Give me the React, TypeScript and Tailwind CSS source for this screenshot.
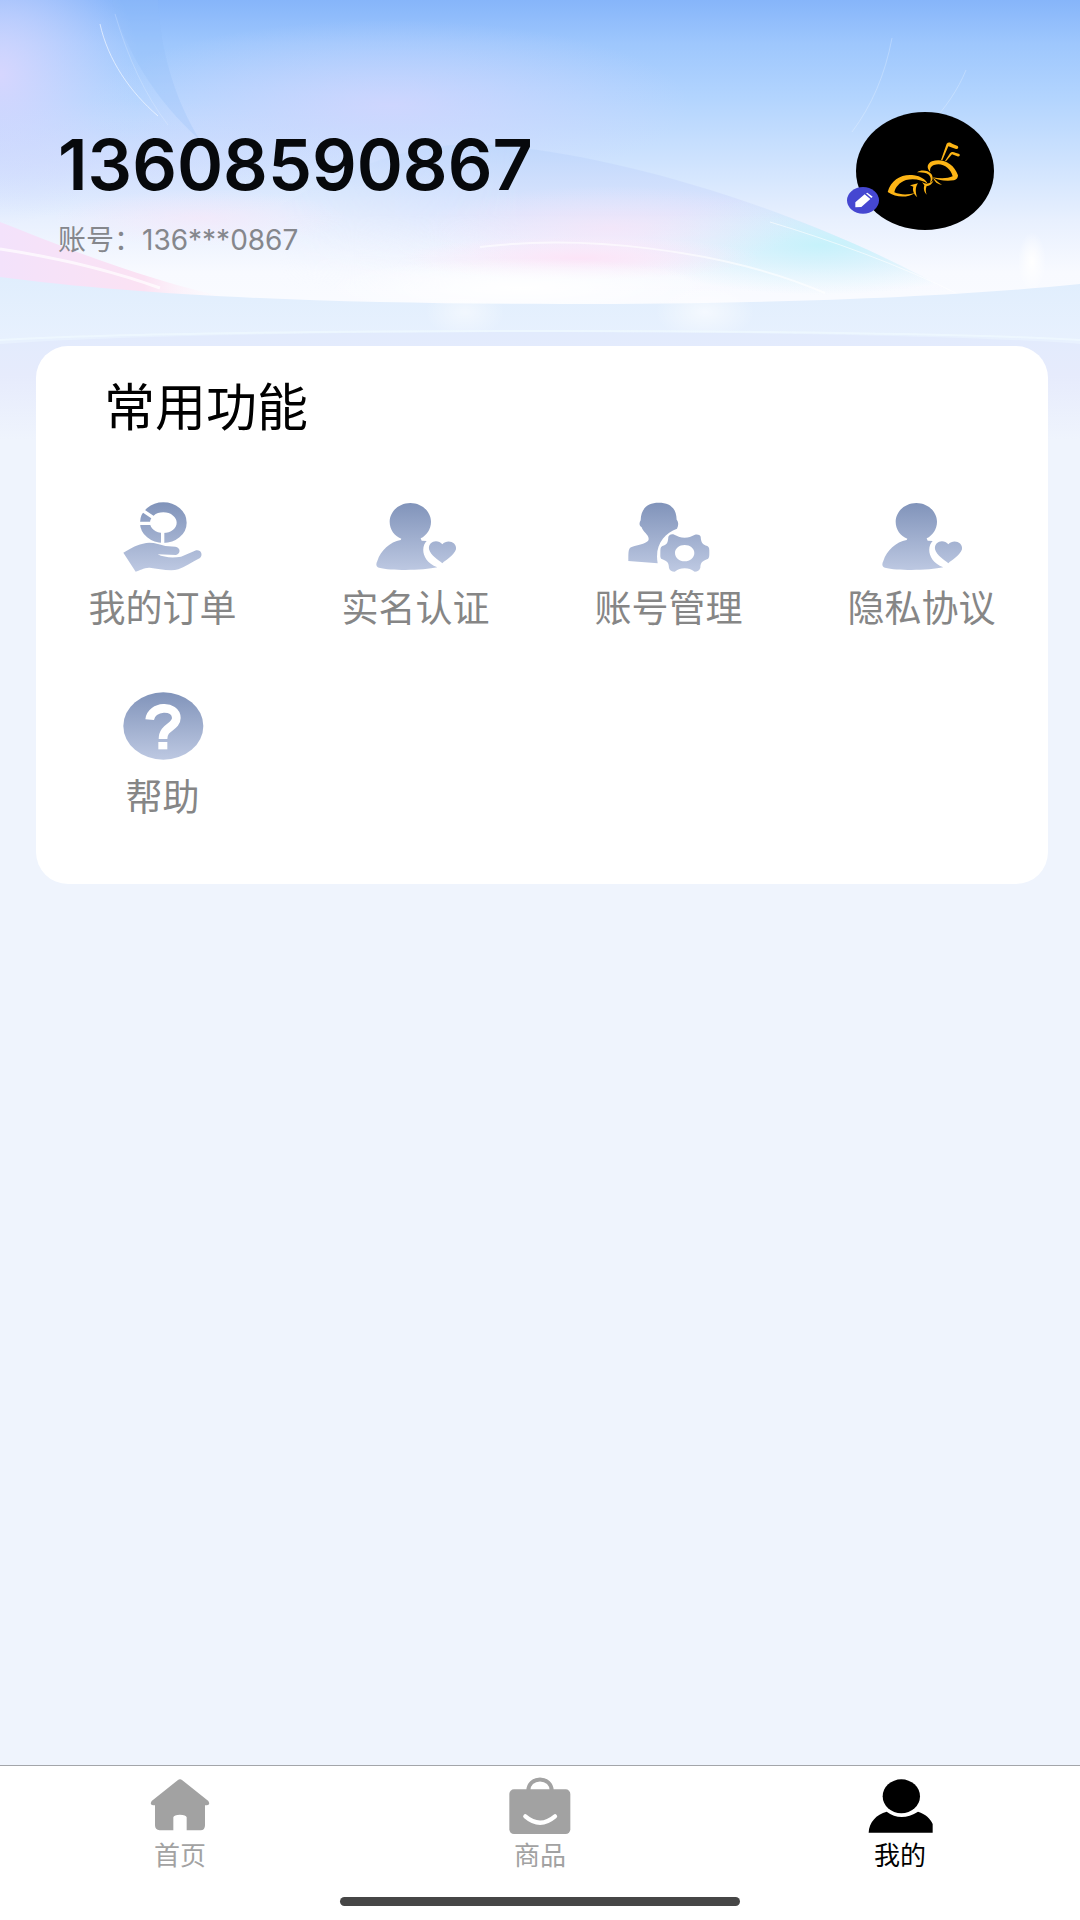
import React, { ReactElement } from 'react';

interface FeatureProps {
  label: string;
  children: ReactElement;
}

interface TabProps {
  label: string;
  icon: ReactElement;
  active?: boolean;
}

const HeaderArt = () => (
  <svg
    className="absolute inset-x-0 top-0 h-[440px] w-full"
    viewBox="0 0 1080 440"
    preserveAspectRatio="none"
    aria-hidden="true"
  >
    <defs>
      <linearGradient id="sky" x1="0" y1="0" x2="0" y2="1">
        <stop offset="0" stopColor="#86b5fa" />
        <stop offset="0.1" stopColor="#9ec7fd" />
        <stop offset="0.22" stopColor="#b2d4fe" />
        <stop offset="0.36" stopColor="#cde2fe" />
        <stop offset="0.5" stopColor="#e8f0fe" />
        <stop offset="0.62" stopColor="#f8faff" />
        <stop offset="1" stopColor="#ffffff" />
      </linearGradient>
      <radialGradient id="violet">
        <stop offset="0" stopColor="#d6d6fe" />
        <stop offset="1" stopColor="#d0d8ff" stopOpacity="0" />
      </radialGradient>
      <radialGradient id="pink">
        <stop offset="0" stopColor="#fce4f7" />
        <stop offset="1" stopColor="#fde8fa" stopOpacity="0" />
      </radialGradient>
      <radialGradient id="white">
        <stop offset="0" stopColor="#ffffff" />
        <stop offset="1" stopColor="#ffffff" stopOpacity="0" />
      </radialGradient>
      <radialGradient id="cyan">
        <stop offset="0" stopColor="#c6f2fb" />
        <stop offset="1" stopColor="#cdf0fc" stopOpacity="0" />
      </radialGradient>
      <linearGradient id="hill" x1="0" y1="0" x2="0" y2="1">
        <stop offset="0" stopColor="#bfd7fc" />
        <stop offset="0.45" stopColor="#dce5fd" />
        <stop offset="1" stopColor="#ffffff" stopOpacity="0" />
      </linearGradient>
      <linearGradient id="fadeIn" gradientUnits="userSpaceOnUse" x1="270" y1="0" x2="520" y2="0">
        <stop offset="0" stopColor="#000000" />
        <stop offset="1" stopColor="#ffffff" />
      </linearGradient>
      <linearGradient id="ribbon" x1="0" y1="0" x2="1" y2="0">
        <stop offset="0" stopColor="#f3e2fb" />
        <stop offset="0.6" stopColor="#fbe2f3" />
        <stop offset="1" stopColor="#ffffff" stopOpacity="0" />
      </linearGradient>
      <linearGradient id="water" x1="0" y1="0" x2="0" y2="1">
        <stop offset="0" stopColor="#e0eefd" />
        <stop offset="0.4" stopColor="#e8f1fe" />
        <stop offset="1" stopColor="#eff4fd" />
      </linearGradient>
      <linearGradient id="shore" x1="0" y1="0" x2="0" y2="1">
        <stop offset="0" stopColor="#e2ebfd" />
        <stop offset="0.4" stopColor="#e6ebfc" />
        <stop offset="1" stopColor="#eff4fd" />
      </linearGradient>
      <mask id="hillMask">
        <rect width="1080" height="440" fill="url(#fadeIn)" />
      </mask>
      <clipPath id="hillClip">
        <path d="M280 205 C360 160 430 140 490 145 C620 153 820 215 965 300 L280 300 Z" />
      </clipPath>
    </defs>
    <rect width="1080" height="440" fill="url(#sky)" />
    <ellipse cx="0" cy="75" rx="140" ry="150" fill="url(#violet)" />
    <ellipse cx="390" cy="105" rx="300" ry="85" fill="url(#violet)" opacity="0.75" />
    <ellipse cx="130" cy="160" rx="230" ry="60" fill="url(#violet)" opacity="0.4" />
    <path d="M112 0 C125 50 155 100 200 140 C175 100 160 50 158 0 Z" fill="#8fbaf9" opacity="0.25" />
    <g mask="url(#hillMask)">
      <path d="M280 205 C360 160 430 140 490 145 C620 153 820 215 965 300 L280 300 Z" fill="url(#hill)" />
    </g>
    <g clipPath="url(#hillClip)">
      <ellipse cx="820" cy="245" rx="190" ry="50" fill="url(#cyan)" />
      <ellipse cx="610" cy="228" rx="190" ry="42" fill="url(#pink)" opacity="0.6" />
    </g>
    <ellipse cx="200" cy="218" rx="150" ry="28" fill="url(#pink)" opacity="0.5" />
    <ellipse cx="580" cy="258" rx="180" ry="22" fill="url(#pink)" />
    <ellipse cx="520" cy="288" rx="200" ry="30" fill="url(#white)" />
    <path d="M480 247 C580 235 720 248 825 293" fill="none" stroke="#ffffff" strokeWidth="2" opacity="0.6" />
    <path d="M770 222 C830 240 900 265 960 295" fill="none" stroke="#ffffff" strokeWidth="1" opacity="0.6" />
    <path d="M0 222 C60 245 140 280 240 300 C150 300 70 290 0 279 Z" fill="url(#ribbon)" />
    <path d="M0 249 C60 258 110 270 160 288" fill="none" stroke="#ffffff" strokeWidth="3" opacity="0.7" />
    <path d="M100 24 C108 60 130 92 158 116" fill="none" stroke="#ffffff" strokeWidth="1" opacity="0.6" />
    <path d="M115 14 C128 58 145 95 168 125" fill="none" stroke="#ffffff" strokeWidth="1" opacity="0.2" />
    <path d="M892 38 C885 75 872 105 852 132 M966 70 C958 90 945 108 930 125" fill="none" stroke="#ffffff" strokeWidth="1" opacity="0.25" />
    <ellipse cx="1032" cy="262" rx="14" ry="30" fill="url(#white)" />
    <path d="M0 277 C150 297 350 304 560 304 C780 304 950 297 1080 284 V440 H0 Z" fill="url(#water)" />
    <ellipse cx="465" cy="312" rx="40" ry="26" fill="url(#white)" opacity="0.5" />
    <ellipse cx="705" cy="312" rx="50" ry="28" fill="url(#white)" opacity="0.6" />
    <path d="M0 344 C200 328 880 328 1080 344 V440 H0 Z" fill="url(#shore)" />
    <path d="M0 340 C200 328 880 328 1080 340" fill="none" stroke="#f2fbff" strokeWidth="2" opacity="0.6" />
  </svg>
);

const AntLogo = () => (
  <svg className="h-[118px] w-[138px]" viewBox="78 36 414 354" aria-hidden="true">
    <ellipse cx="285" cy="213" rx="207" ry="177" fill="#000000" />
    <g fill="#fdb515">
      <path d="M173 276 C184 238 216 221 252 226 C272 229 286 238 293 251 C276 239 250 234 228 240 C208 247 196 262 193 277 C212 285 236 285 256 278 C232 294 200 294 173 276 Z" />
      <path d="M261 217 C272 209 294 210 304 222 C311 233 308 244 299 250 C306 236 301 225 289 220 C280 217 271 217 261 217 Z" />
      <path d="M301 216 C288 204 292 190 306 184 C336 173 372 190 384 226 C384 234 380 239 372 241 C346 245 322 240 307 232 C330 236 354 236 368 229 C362 203 336 186 312 195 C302 199 299 207 301 216 Z" />
      <path d="M240 256 L264 250 C255 261 256 280 262 292 C250 281 247 270 250 260 Z" />
      <path d="M276 246 C288 255 302 251 311 241 C306 254 298 259 290 258 C286 267 287 276 290 284 C280 274 281 263 283 256 Z" />
      <path d="M309 233 C318 240 326 248 336 254 C324 253 315 247 309 233 Z" />
      <path d="M333 180 L350 131 C355 125 363 128 368 132 L383 138 C388 144 382 149 376 146 L355 139 L337 181 Z" />
      <path d="M345 183 L360 160 C364 155 370 155 376 158 L388 162 C392 167 387 171 382 169 L366 163 L348 184 Z" />
    </g>
  </svg>
);

const PencilBadge = () => (
  <svg className="h-[27px] w-8" viewBox="0 0 96 81" aria-hidden="true">
    <ellipse cx="48" cy="40" rx="48" ry="40" fill="#4547d1" />
    <path d="M25 46 L53 22 L70 36 L43 60 L25 61 Z M57 19 L61 17 L77 29 L73 33 Z" fill="#ffffff" />
  </svg>
);

const OrderIcon = () => (
  <svg className="h-[72px] w-[84px]" viewBox="0 0 252 216" aria-hidden="true">
    <ellipse cx="127" cy="65" rx="55" ry="46" fill="none" stroke="url(#steel)" strokeWidth="30" />
    <path d="M127 70 L60 25 M127 67 H48 M125 66 V128" stroke="#ffffff" strokeWidth="10" />
    <path
      d="M7 155 C25 145 40 134 66 128 C90 121 115 130 133 135 L163 137 C179 139 180 158 165 162 L110 160 C128 170 158 171 180 167 L222 149 C238 143 248 160 237 171 C212 184 190 198 172 205 C148 212 112 203 86 200 C70 199 55 209 44 212 Z"
      fill="url(#steel)"
    />
  </svg>
);

const PersonHeartIcon = () => (
  <svg className="h-[72px] w-[84px]" viewBox="0 0 252 216" aria-hidden="true">
    <path
      d="M109 6 C143 6 171 32 171 62 C171 84 158 103 140 112 L143 119 L158 120 C141 135 141 181 190 199 C150 208 55 210 15 200 C6 197 5 190 10 180 C20 148 48 123 80 117 L82 113 C61 105 47 85 47 62 C47 32 75 6 109 6 Z"
      fill="url(#steel)"
    />
    <path
      d="M205 187 C195 178 170 164 165 145 C162 120 192 114 205 130 C218 114 249 121 246 145 C240 164 216 176 205 187 Z"
      fill="url(#steel)"
    />
  </svg>
);

const PersonGearIcon = () => (
  <svg className="h-[72px] w-[84px]" viewBox="0 0 252 216" aria-hidden="true">
    <path
      d="M95 5 C130 5 148 22 149 56 C155 64 155 72 150 83 C112 97 82 132 92 187 L4 180 C4 152 4 141 14 138 C38 131 64 127 65 115 C66 101 47 93 44 79 C36 73 36 66 41 58 C42 22 62 5 95 5 Z"
      fill="url(#steel)"
    />
    <path
      fillRule="evenodd"
      d="M128 102 C132 99 138 99 142 101 C155 107 160 110 173 110 C186 110 191 107 204 101 C211 99 219 101 221 107 C222 124 226 130 241 135 C247 138 247 144 247 155 C247 166 247 172 240 175 C225 181 221 185 220 200 C218 208 211 212 203 212 C191 205 186 202 173 202 C160 202 155 205 143 212 C135 212 127 208 126 201 C125 185 121 181 106 175 C99 172 100 166 100 155 C100 144 100 138 106 135 C121 130 123 124 124 107 Z M173 132 C157 132 144 142 144 156 C144 170 157 181 173 181 C189 181 202 170 202 156 C202 142 189 132 173 132 Z"
      fill="url(#steel)"
    />
  </svg>
);

const HelpIcon = () => (
  <svg className="h-[72px] w-[84px]" viewBox="0 0 252 216" aria-hidden="true">
    <ellipse cx="127" cy="108" rx="120" ry="101" fill="url(#steel)" />
    <path
      d="M86 89 C90 46 166 43 166 84 C166 112 126 109 126 147"
      fill="none"
      stroke="#ffffff"
      strokeWidth="26"
    />
    <path d="M112 156 H139 V178 H112 Z" fill="#ffffff" />
  </svg>
);

const HomeIcon = () => (
  <svg className="h-[60px] w-[66px]" viewBox="0 0 198 180">
    <path
      d="M92 19 Q99 13 106 19 L184 81 Q191 92 180 94 H174 V154 Q174 169 161 169 H119 V130 Q117 122 99 122 Q81 122 79 130 V169 H38 Q24 167 24 154 V94 H18 Q7 92 14 81 Z"
      fill="currentColor"
    />
  </svg>
);

const BagIcon = () => (
  <svg className="h-[60px] w-[66px]" viewBox="0 0 198 180">
    <path d="M64 54 C60 4 138 4 134 54" fill="none" stroke="currentColor" strokeWidth="12" />
    <rect x="7" y="46" width="183" height="134" rx="14" fill="currentColor" />
    <path d="M55 127 Q99 165 144 127" fill="none" stroke="#ffffff" strokeWidth="13" strokeLinecap="round" />
  </svg>
);

const MineIcon = () => (
  <svg className="h-[60px] w-[66px]" viewBox="0 0 198 180">
    <ellipse cx="103" cy="67" rx="56" ry="51" fill="currentColor" />
    <path d="M59 113 Q102 145 153 113 C176 120 190 134 197 150 V176 H5 C6 145 28 121 59 113 Z" fill="currentColor" />
  </svg>
);

const Feature = ({ label, children }: FeatureProps) => (
  <button type="button" className="flex flex-col items-center gap-3.5">
    {children}
    <span className="text-[37px] leading-[44px] text-[#868686]">{label}</span>
  </button>
);

const Tab = ({ label, icon, active }: TabProps) => (
  <a
    href="#"
    aria-current={active ? 'page' : undefined}
    className={
      active
        ? 'flex flex-col items-center gap-1.5 text-black'
        : 'flex flex-col items-center gap-1.5 text-[#a2a2a2]'
    }
  >
    {icon}
    <span className="text-[26px] leading-8">{label}</span>
  </a>
);

export default function App() {
  return (
    <div className="relative isolate flex min-h-screen flex-col bg-[#eff4fd] font-['Inter','Noto_Sans_CJK_SC',sans-serif]">
      <svg className="absolute h-0 w-0" aria-hidden="true">
        <defs>
          <linearGradient id="steel" gradientUnits="userSpaceOnUse" x1="0" y1="0" x2="0" y2="216">
            <stop offset="0" stopColor="#7f92b9" />
            <stop offset="1" stopColor="#bfcae3" />
          </linearGradient>
        </defs>
      </svg>
      <div className="absolute inset-x-0 top-0 -z-10">
        <HeaderArt />
      </div>

      <header className="flex items-start justify-between pt-28 pr-[86px] pl-[58px]">
        <div className="pt-3">
          <h1 className="text-[70px] leading-[82px] font-semibold text-[#07090c]">13608590867</h1>
          <p className="mt-4 text-[28px] leading-9 text-[#85878c]">账号：136***0867</p>
        </div>
        <button type="button" aria-label="编辑头像" className="relative">
          <AntLogo />
          <span className="absolute bottom-4 -left-[9px]">
            <PencilBadge />
          </span>
        </button>
      </header>

      <main className="flex-1">
        <section className="mt-[88px] mr-8 ml-9 rounded-[32px] bg-white pt-[30px] pb-16">
          <h2 className="pl-[68px] text-[51px] leading-[64px] text-black">常用功能</h2>
          <div className="mt-[61px] grid grid-cols-4 gap-y-[59px]">
            <Feature label="我的订单">
              <OrderIcon />
            </Feature>
            <Feature label="实名认证">
              <PersonHeartIcon />
            </Feature>
            <Feature label="账号管理">
              <PersonGearIcon />
            </Feature>
            <Feature label="隐私协议">
              <PersonHeartIcon />
            </Feature>
            <Feature label="帮助">
              <HelpIcon />
            </Feature>
          </div>
        </section>
      </main>

      <footer className="border-t border-[#a3a5aa] bg-white pt-2 pb-3.5">
        <nav className="grid grid-cols-3">
          <Tab label="首页" icon={<HomeIcon />} />
          <Tab label="商品" icon={<BagIcon />} />
          <Tab label="我的" icon={<MineIcon />} active />
        </nav>
        <div className="mx-auto mt-[25px] h-[9px] w-[37%] rounded-full bg-[#464646]" />
      </footer>
    </div>
  );
}
